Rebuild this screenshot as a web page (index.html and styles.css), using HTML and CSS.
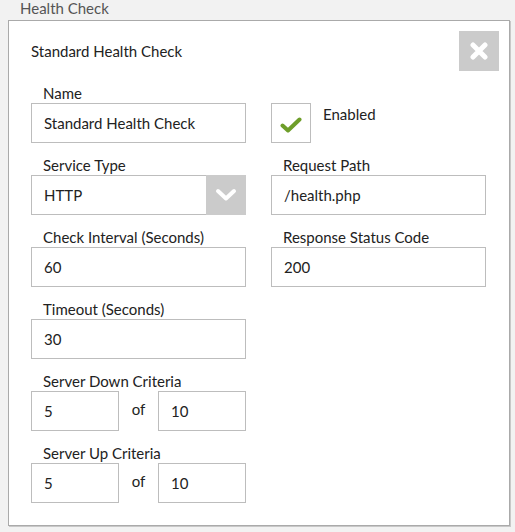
FILE: index.html
```html
<!DOCTYPE html>
<html>
<head>
<meta charset="utf-8">
<link rel="stylesheet" href="styles.css">
</head>
<body>
<div class="page-title">Health Check</div>
<div class="panel">
  <div class="panel-head">
    <div class="panel-title">Standard Health Check</div>
    <div class="close-btn">
      <svg width="18" height="18" viewBox="0 0 18 18"><path d="M3 3 L15 15 M15 3 L3 15" stroke="#fff" stroke-width="5" stroke-linecap="round"/></svg>
    </div>
  </div>
  <div class="form-grid">
    <div class="field">
      <div class="label">Name</div>
      <div class="input">Standard Health Check</div>
    </div>
    <div class="field check-field">
      <div class="checkbox">
        <svg width="22" height="16" viewBox="0 0 22 16"><path d="M2.5 8.5 L8 13.5 L19.5 2.5" fill="none" stroke="#6e9e2a" stroke-width="4" stroke-linecap="round" stroke-linejoin="round"/></svg>
      </div>
      <div class="check-label">Enabled</div>
    </div>
    <div class="field">
      <div class="label">Service Type</div>
      <div class="input select">
        <span class="select-value">HTTP</span>
        <span class="select-btn">
          <svg width="22" height="14" viewBox="0 0 22 14"><path d="M3 3 L11 10.5 L19 3" fill="none" stroke="#fff" stroke-width="4" stroke-linecap="round" stroke-linejoin="round"/></svg>
        </span>
      </div>
    </div>
    <div class="field">
      <div class="label">Request Path</div>
      <div class="input">/health.php</div>
    </div>
    <div class="field">
      <div class="label">Check Interval (Seconds)</div>
      <div class="input">60</div>
    </div>
    <div class="field">
      <div class="label">Response Status Code</div>
      <div class="input">200</div>
    </div>
    <div class="field">
      <div class="label">Timeout (Seconds)</div>
      <div class="input">30</div>
    </div>
    <div class="field"></div>
    <div class="field">
      <div class="label">Server Down Criteria</div>
      <div class="pair">
        <div class="input small">5</div>
        <span class="of">of</span>
        <div class="input small">10</div>
      </div>
    </div>
    <div class="field"></div>
    <div class="field">
      <div class="label">Server Up Criteria</div>
      <div class="pair">
        <div class="input small">5</div>
        <span class="of">of</span>
        <div class="input small">10</div>
      </div>
    </div>
  </div>
</div>
</body>
</html>
```
FILE: styles.css
```css
* { box-sizing: border-box; }
html, body { margin: 0; padding: 0; }
body {
  background: #f2f2f2;
  font-family: Lato, "Open Sans", sans-serif;
  font-size: 15px;
  color: #222;
  width: 515px;
  height: 532px;
  overflow: hidden;
}
.page-title {
  height: 20px;
  line-height: 20px;
  padding-left: 20px;
  color: #555;
  font-size: 15px;
  margin-top: -2px;
  margin-bottom: 2px;
}
.panel {
  margin-left: 8px;
  width: 502px;
  height: 506px;
  background: #fff;
  border: 1px solid #aaa;
  box-shadow: 1px 1px 0 #c8c8c8;
  padding: 10px 10px 0 22px;
}
.panel-head {
  display: flex;
  align-items: center;
  justify-content: space-between;
  height: 40px;
}
.panel-title {
  line-height: 20px;
}
.close-btn {
  width: 40px;
  height: 40px;
  background: #cbcbcb;
  display: flex;
  align-items: center;
  justify-content: center;
}
.form-grid {
  display: grid;
  grid-template-columns: 215px 215px;
  column-gap: 25px;
  row-gap: 12px;
  margin-top: 12px;
}
.field {
  display: flex;
  flex-direction: column;
}
.label {
  height: 20px;
  line-height: 20px;
  padding-left: 12px;
}
.input {
  height: 40px;
  border: 1px solid #bdbdbd;
  display: flex;
  align-items: center;
  padding-left: 12px;
  background: #fff;
}
.select {
  padding-right: 0;
  justify-content: space-between;
}
.select-btn {
  width: 40px;
  height: 40px;
  margin: -1px -1px -1px 0;
  background: #cbcbcb;
  display: flex;
  align-items: center;
  justify-content: center;
}
.check-field {
  flex-direction: row;
  align-items: flex-start;
  padding-top: 20px;
  gap: 12px;
}
.checkbox {
  width: 40px;
  height: 40px;
  border: 1px solid #bdbdbd;
  display: flex;
  align-items: center;
  justify-content: center;
  padding-top: 4px;
}
.check-label {
  line-height: 20px;
  padding-top: 1px;
}
.pair {
  display: flex;
  align-items: center;
}
.input.small {
  width: 88px;
}
.of {
  width: 39px;
  text-align: center;
  margin-top: -4px;
}
```
